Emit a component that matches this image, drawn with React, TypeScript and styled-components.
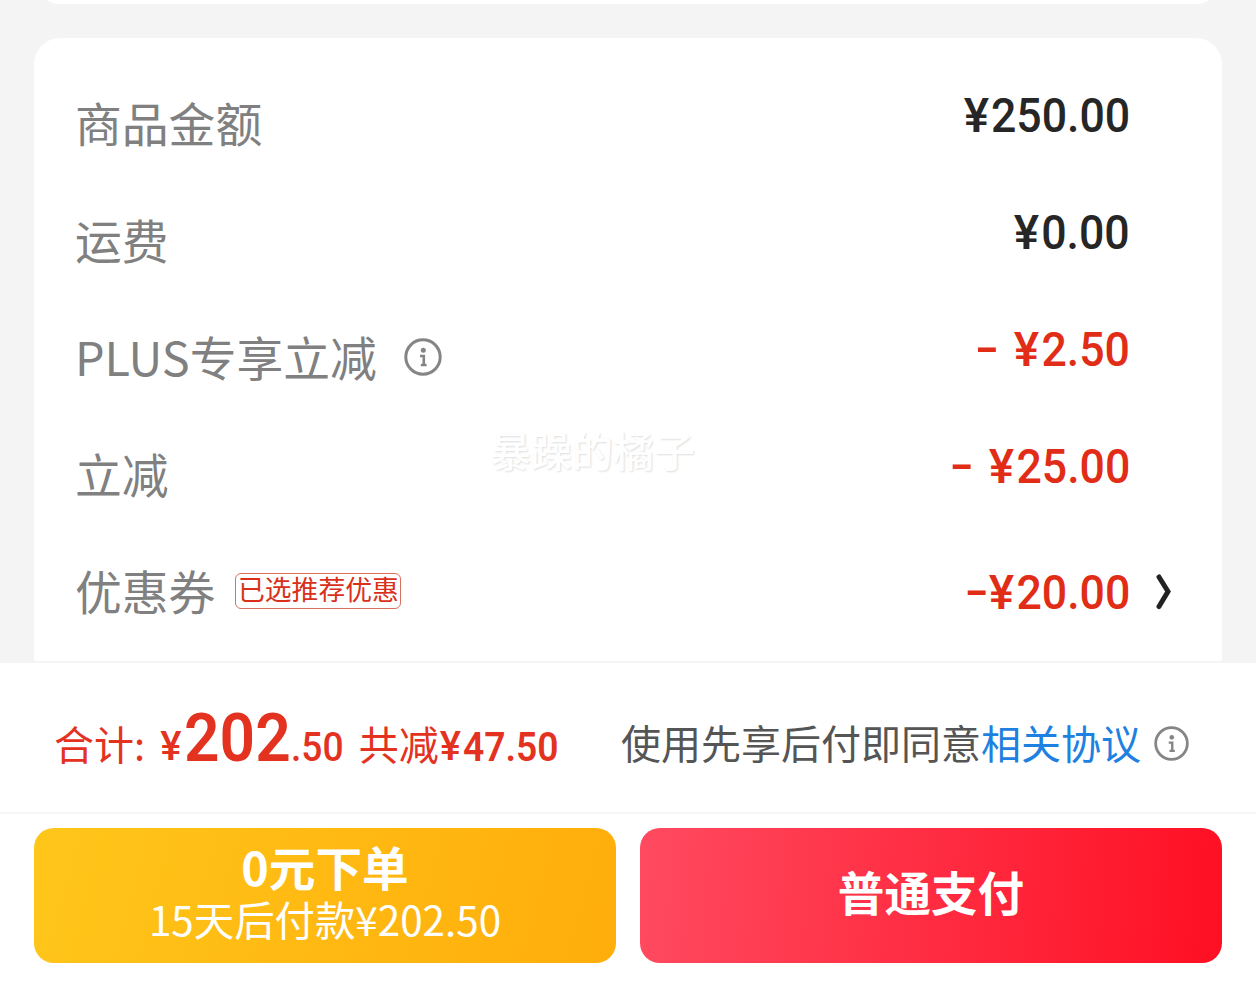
import React from 'react';
import styled, { createGlobalStyle } from 'styled-components';

const GlobalStyle = createGlobalStyle`
  * {
    box-sizing: border-box;
  }

  body {
    margin: 0;
    background: #f4f4f4;
    font-family: 'Noto Sans CJK SC', sans-serif;
  }
`;

const Page = styled.div`
  display: flex;
  flex-direction: column;
  width: 1256px;
  height: 1004px;
  overflow: hidden;
`;

// Only the rounded bottom edge of this card is in view
const PreviousCard = styled.div`
  flex: none;
  height: 60px;
  margin: -56px 34px 34px;
  background: #fff;
  border-radius: 26px;
`;

const PriceCard = styled.section`
  position: relative;
  flex: none;
  height: 623px;
  margin: 0 34px;
  padding: 27px 42px 0 41px;
  background: #fff;
  border-radius: 26px 26px 0 0;
`;

const Row = styled.div`
  display: flex;
  align-items: center;
  height: 117px;
`;

const Label = styled.span`
  padding-bottom: 4px;
  font-size: 46.8px;
  line-height: 60px;
  color: #808080;
  white-space: nowrap;
`;

const Tag = styled.span`
  width: 166px;
  height: 36px;
  margin: 0 0 2px 20px;
  border: 1px solid #d9705f;
  border-radius: 6px;
  font-size: 26.8px;
  line-height: 29px;
  text-align: center;
  color: #d8301a;
  white-space: nowrap;
`;

// Prices are set slightly condensed
const Amount = styled.span<{ $red?: boolean; $raised?: boolean }>`
  margin-left: auto;
  padding-top: ${({ $raised }) => ($raised ? '0' : '2px')};
  padding-bottom: ${({ $raised }) => ($raised ? '16px' : '0')};
  font-family: Roboto, sans-serif;
  font-size: 48px;
  font-weight: 500;
  line-height: 60px;
  color: ${({ $red }) => ($red ? '#e12d17' : '#262626')};
  white-space: pre;
  transform: scaleX(0.93);
  transform-origin: right center;
`;

const Yen = styled.span`
  display: inline-block;
  margin-right: 3px;
  transform: scaleX(1.07);
`;

const Minus = styled.span<{ $gap: number }>`
  display: inline-block;
  margin-right: ${({ $gap }) => $gap}px;
  transform: translateY(-2px) scaleX(1.55);
`;

const ArrowSlot = styled.span`
  display: flex;
  flex: none;
  justify-content: flex-end;
  width: 50px;
  padding-right: 8px;
`;

const InfoSlot = styled.span<{ $left: number }>`
  display: flex;
  margin-left: ${({ $left }) => $left}px;
  padding-bottom: 2px;
`;

const Watermark = styled.span`
  position: absolute;
  top: 381px;
  left: 456px;
  font-size: 41px;
  font-weight: 500;
  line-height: 60px;
  color: #fff;
  text-shadow: 1px 1px 2px #dedede;
  white-space: nowrap;
`;

const BottomBar = styled.footer`
  flex: 1;
  border-top: 2px solid #f4f4f4;
  background: #fff;
`;

const Summary = styled.div`
  display: flex;
  align-items: center;
  height: 151px;
  padding: 8px 66px 0 54px;
  border-bottom: 2px solid #f6f6f6;
`;

const Total = styled.div`
  display: flex;
  align-items: baseline;
  width: 567px;
  font-size: 40px;
  line-height: 72px;
  color: #e3321f;
  white-space: nowrap;
`;

const Digits = styled.span<{ $size: number; $weight: number; $left?: number; $right?: number }>`
  margin-left: ${({ $left = 0 }) => $left}px;
  margin-right: ${({ $right = 0 }) => $right}px;
  font-family: Roboto, sans-serif;
  font-size: ${({ $size }) => $size}px;
  font-weight: ${({ $weight }) => $weight};
  transform: translateY(1px) scaleX(0.93);
  transform-origin: left center;
`;

const TotalYen = styled.span<{ $left: number }>`
  margin-left: ${({ $left }) => $left}px;
  font-family: Roboto, sans-serif;
  font-weight: 500;
`;

const Saved = styled.span`
  margin-left: 15px;
`;

const Agreement = styled.div`
  display: flex;
  align-items: center;
  font-size: 40px;
  line-height: 60px;
  color: #555;
  white-space: nowrap;
`;

const AgreementLink = styled.a`
  color: #1e80e0;
`;

const SmallInfoSlot = styled(InfoSlot)`
  padding: 3px 0 0;
`;

const Actions = styled.div`
  display: flex;
  gap: 24px;
  padding: 14px 34px 0;
`;

const PayButton = styled.button<{ $background: string; $lift: number }>`
  display: flex;
  flex: 1;
  flex-direction: column;
  align-items: center;
  justify-content: center;
  height: 135px;
  padding: 0 0 ${({ $lift }) => $lift}px;
  border: 0;
  border-radius: 20px;
  background: ${({ $background }) => $background};
  font-family: inherit;
  color: #fff;
  cursor: pointer;
`;

const ButtonTitle = styled.span`
  font-size: 46.6px;
  font-weight: 700;
  line-height: 52px;
`;

const ButtonNote = styled.span`
  font-size: 40.4px;
  line-height: 54px;
`;

function InfoIcon({ size }: { size: number }) {
  return (
    <svg width={size} height={size} viewBox="0 0 38 38" fill="none" stroke="#858585">
      <circle cx="19" cy="19" r="17.2" strokeWidth="3" />
      <circle cx="19.3" cy="12.3" r="2.5" fill="#858585" stroke="none" />
      <path d="M16 18H19.8V27M16.8 27H22.6" strokeWidth="2.6" />
    </svg>
  );
}

function ArrowIcon() {
  return (
    <svg width="16" height="36" viewBox="0 0 16 36" fill="none" stroke="#222">
      <path d="M3 3L12 17.5L3 32.5" strokeWidth="5" strokeLinecap="round" />
    </svg>
  );
}

export default function App() {
  return (
    <>
      <GlobalStyle />
      <Page>
        <PreviousCard />
        <PriceCard>
          <Row>
            <Label>商品金额</Label>
            <Amount $raised>
              <Yen>¥</Yen>250.00
            </Amount>
            <ArrowSlot />
          </Row>
          <Row>
            <Label>运费</Label>
            <Amount $raised>
              <Yen>¥</Yen>0.00
            </Amount>
            <ArrowSlot />
          </Row>
          <Row>
            <Label>PLUS专享立减</Label>
            <InfoSlot $left={27}>
              <InfoIcon size={38} />
            </InfoSlot>
            <Amount $red $raised>
              <Minus $gap={22}>-</Minus>
              <Yen>¥</Yen>2.50
            </Amount>
            <ArrowSlot />
          </Row>
          <Row>
            <Label>立减</Label>
            <Amount $red $raised>
              <Minus $gap={22}>-</Minus>
              <Yen>¥</Yen>25.00
            </Amount>
            <ArrowSlot />
          </Row>
          <Row>
            <Label>优惠券</Label>
            <Tag>已选推荐优惠</Tag>
            <Amount $red>
              <Minus $gap={6}>-</Minus>
              <Yen>¥</Yen>20.00
            </Amount>
            <ArrowSlot>
              <ArrowIcon />
            </ArrowSlot>
          </Row>
          <Watermark>暴躁的橘子</Watermark>
        </PriceCard>

        <BottomBar>
          <Summary>
            <Total>
              合计:
              <TotalYen $left={15}>¥</TotalYen>
              <Digits $size={67} $weight={600} $left={3} $right={-8}>202</Digits>
              <Digits $size={40} $weight={500} $right={-4}>.50</Digits>
              <Saved>共减</Saved>
              <TotalYen $left={1}>¥</TotalYen>
              <Digits $size={40} $weight={600} $left={2}>47.50</Digits>
            </Total>
            <Agreement>
              使用先享后付即同意<AgreementLink>相关协议</AgreementLink>
              <SmallInfoSlot $left={13}>
                <InfoIcon size={35} />
              </SmallInfoSlot>
            </Agreement>
          </Summary>
          <Actions>
            <PayButton $background="linear-gradient(105deg, #ffc61a, #ffad0a)" $lift={5}>
              <ButtonTitle>0元下单</ButtonTitle>
              <ButtonNote>15天后付款¥202.50</ButtonNote>
            </PayButton>
            <PayButton $background="linear-gradient(95deg, #ff4a60, #ff0f23)" $lift={10}>
              <ButtonTitle>普通支付</ButtonTitle>
            </PayButton>
          </Actions>
        </BottomBar>
      </Page>
    </>
  );
}
